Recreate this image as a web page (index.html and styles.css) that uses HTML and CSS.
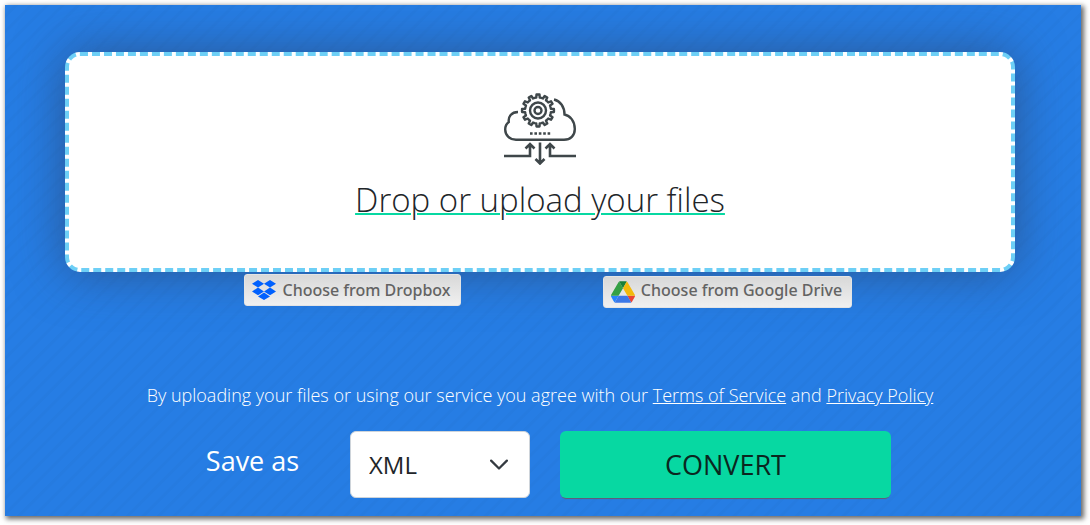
FILE: index.html
```html
<!DOCTYPE html>
<html lang="en">

<head>
    <meta charset="UTF-8">
    <meta name="viewport" content="width=device-width, initial-scale=1.0">
    <title>File Converter</title>
    <link rel="stylesheet" href="styles.css">
</head>

<body>
    <main class="converter">
        <button type="button" class="drop-area">
            <svg class="drop-icon" viewBox="0 0 72 72" fill="none" stroke="#3f474a" stroke-width="2.4" aria-hidden="true">
                <!-- cloud -->
                <path d="M14 19C7.500 19 4 23.500 4.800 29C2 31 1.200 34 1.200 36.500C1.200 42.500 6 46.800 12 46.800H60C66.500 46.800 70.800 42.500 70.800 36C70.800 28 66 22.500 60.500 21.500C60.500 14 56.500 8 50 6.500"/>
                <!-- gear -->
                <path id="gear" stroke-linejoin="round"/>
                <circle cx="34" cy="17.500" r="8"/>
                <circle cx="34" cy="17.500" r="3.500"/>
                <path d="M26 40.500H46.200" stroke-width="2.600" stroke-dasharray="2.600 1.800"/>
                <!-- arrows -->
                <path d="M0 63H26V52M21.500 55.500L26 51L30.500 55.500M72 63H46V52M41.500 55.500L46 51L50.500 55.500M36 49.500V70M31.500 66L36 70.500L40.500 66" stroke-width="2.600"/>
            </svg>
            <span class="drop-title">Drop or upload your files</span>
        </button>

        <div class="sources">
            <button type="button" class="source-button dropbox">
                <svg width="24" height="20" viewBox="0 0 24 20" fill="#0061fe" aria-hidden="true">
                    <path d="M6 0L12 3.800L6 7.600L0 3.800ZM18 0L24 3.800L18 7.600L12 3.800ZM0 11.400L6 7.600L12 11.400L6 15.200ZM18 7.600L24 11.400L18 15.200L12 11.400ZM6 16.400L12 12.600L18 16.400L12 20Z"/>
                </svg>
                <span>Choose from Dropbox</span>
            </button>
            <button type="button" class="source-button drive">
                <svg width="24" height="22" viewBox="0 0 87.300 78" aria-hidden="true">
                    <path fill="#2684fc" d="m6.600 66.850 3.850 6.650c.8 1.400 1.950 2.500 3.300 3.300l13.750-23.800h-27.500c0 1.550.4 3.100 1.200 4.500z"/>
                    <path fill="#34a045" d="m43.650 25-13.750-23.800c-1.350.8-2.500 1.900-3.300 3.300l-25.400 44a9.060 9.060 0 0 0-1.200 4.500h27.500z"/>
                    <path fill="#ea4335" d="m73.550 76.800c1.350-.8 2.500-1.900 3.300-3.300l1.600-2.750 7.650-13.250c.8-1.400 1.200-2.950 1.200-4.500h-27.502l5.852 11.500z"/>
                    <path fill="#188038" d="m43.650 25 13.750-23.800c-1.350-.8-2.900-1.200-4.500-1.200h-18.500c-1.600 0-3.150.45-4.500 1.200z"/>
                    <path fill="#3b78e7" d="m59.800 53h-32.300l-13.750 23.800c1.350.8 2.900 1.200 4.500 1.200h50.800c1.600 0 3.150-.45 4.500-1.200z"/>
                    <path fill="#f2b90c" d="m73.400 26.500-12.700-22c-.8-1.400-1.950-2.500-3.300-3.300l-13.750 23.800 16.150 28h27.450c0-1.550-.4-3.100-1.200-4.500z"/>
                </svg>
                <span>Choose from Google Drive</span>
            </button>
        </div>

        <p class="terms">By uploading your files or using our service you agree with our <a href="#terms">Terms of Service</a> and <a href="#privacy">Privacy Policy</a></p>

        <form class="convert-form">
            <label for="format">Save as</label>
            <div class="select-wrap">
                <select id="format">
                    <option>XML</option>
                    <option>JSON</option>
                    <option>CSV</option>
                </select>
                <svg class="chevron" viewBox="0 0 16 16" fill="none" stroke="#343a40" stroke-width="2" stroke-linecap="round" stroke-linejoin="round" aria-hidden="true">
                    <path d="m1 5 7 7 7-7"/>
                </svg>
            </div>
            <button type="button" class="convert-button">CONVERT</button>
        </form>
    </main>

    <script>
        // gear outline with 12 teeth
        const teeth = 12;
        const points = [];
        for (let i = 0; i < teeth; i++) {
            [[-0.5, 13], [-0.26, 13], [-0.18, 16], [0.18, 16], [0.26, 13]].forEach(([offset, r]) => {
                const a = (i + offset) * 2 * Math.PI / teeth;
                points.push(`${(34 + r * Math.sin(a)).toFixed(2)} ${(17.5 - r * Math.cos(a)).toFixed(2)}`);
            });
        }
        document.getElementById('gear').setAttribute('d', `M${points.join('L')}Z`);
    </script>
</body>

</html>
```
FILE: styles.css
```css
* {
    box-sizing: border-box;
}

body {
    margin: 0;
    padding: 5px 9px 9px 5px;
    background-color: #fff;
    font-family: "Open Sans", sans-serif;
}

button,
select {
    font-family: inherit;
    cursor: pointer;
}

.converter {
    padding: 47px 66px 18px 60px;
    background-color: #267de4;
    background-image: repeating-linear-gradient(135deg, transparent 0 6px, rgba(0, 0, 0, 0.02) 7px 9px, transparent 10px 11px);
    box-shadow: 2px 2px 5px 1px rgba(0, 0, 0, 0.6);
}

.drop-area {
    display: flex;
    flex-direction: column;
    align-items: center;
    width: 100%;
    height: 220px;
    padding: 37px 20px;
    border: 4px dashed #6dcff6;
    border-radius: 15px;
    background-color: #fff;
    box-shadow: 0 0 50px rgba(45, 60, 90, 0.6);
}

.drop-icon {
    width: 72px;
    height: 72px;
}

.drop-title {
    margin-top: 10px;
    color: #212529;
    font-size: 33px;
    font-weight: 300;
    line-height: 50px;
    text-decoration: underline;
    text-decoration-color: #07d8a2;
    text-decoration-thickness: 2px;
}

.sources {
    display: grid;
    grid-template-columns: 1fr 1fr;
    justify-items: center;
    align-items: start;
    max-width: 750px;
    margin: 0 auto;
    padding-top: 2px;
}

.source-button {
    display: flex;
    align-items: center;
    gap: 6px;
    height: 32px;
    padding: 0 9px 0 7px;
    border: 1px solid #e4e4e4;
    border-radius: 3px;
    background: linear-gradient(#d8d8d8, #f0f0f0);
    color: #636363;
    font-family: "Noto Sans", sans-serif;
    font-size: 16px;
    font-weight: 500;
    white-space: nowrap;
}

.drive {
    margin-top: 2px;
}

.drive span {
    padding-bottom: 4px;
}

.terms {
    margin: 74px 0 0;
    color: #fff;
    font-size: 18px;
    font-weight: 300;
    line-height: 27px;
    text-align: center;
}

.terms a {
    color: inherit;
}

.convert-form {
    display: grid;
    grid-template-columns: 155px 180px 1fr;
    gap: 30px;
    max-width: 750px;
    margin: 22px auto 0;
    padding-right: 24px;
}

.convert-form label {
    padding-left: 20px;
    color: #fff;
    font-size: 27px;
    line-height: 60px;
    text-align: center;
}

.select-wrap {
    position: relative;
}

.select-wrap select {
    width: 100%;
    height: 67px;
    padding: 0 50px 0 18px;
    border: 1px solid #ced4da;
    border-radius: 6px;
    appearance: none;
    background-color: #fff;
    color: #212529;
    font-size: 24px;
}

.chevron {
    position: absolute;
    top: 24px;
    right: 22px;
    width: 18px;
    height: 18px;
    pointer-events: none;
}

.convert-button {
    height: 67px;
    border: 0;
    border-radius: 6px;
    background-color: #07d8a2;
    box-shadow: 0 2px 1px -1px rgba(120, 80, 80, 0.8);
    color: #0b2620;
    font-size: 27px;
}
```
